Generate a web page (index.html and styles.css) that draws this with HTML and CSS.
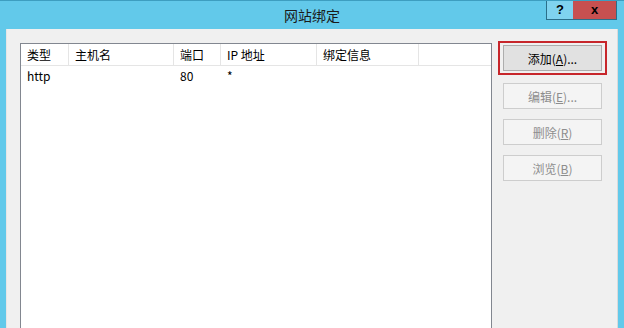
FILE: index.html
```html
<!DOCTYPE html>
<html lang="zh-CN">
<head>
    <meta charset="UTF-8">
    <title>网站绑定</title>
    <link rel="stylesheet" href="styles.css">
</head>
<body>
    <div class="window">
        <div class="titlebar">
            <div class="title">网站绑定</div>
            <div class="help-btn">?</div>
            <div class="close-btn">x</div>
        </div>
        <div class="client">
            <div class="listview">
                <div class="lv-header">
                    <div class="col c-type">类型</div>
                    <div class="col c-host">主机名</div>
                    <div class="col c-port">端口</div>
                    <div class="col c-ip">IP 地址</div>
                    <div class="col c-info">绑定信息</div>
                </div>
                <div class="lv-row">
                    <div class="cell c-type">http</div>
                    <div class="cell c-host"></div>
                    <div class="cell c-port">80</div>
                    <div class="cell c-ip">*</div>
                    <div class="cell c-info"></div>
                </div>
            </div>
            <div class="buttons">
                <div class="focus-ring">
                    <button class="btn">添加(<u>A</u>)...</button>
                </div>
                <button class="btn" disabled>编辑(<u>E</u>)...</button>
                <button class="btn" disabled>删除(<u>R</u>)</button>
                <button class="btn" disabled>浏览(<u>B</u>)</button>
            </div>
        </div>
    </div>
</body>
</html>
```

FILE: styles.css
```css
body {
    margin: 0;
    font-family: "Noto Sans CJK SC", "Liberation Sans", sans-serif;
    font-size: 12px;
    color: #000;
    overflow: hidden;
}

.window {
    background-color: #62c9ea;
    width: 624px;
    height: 328px;
    padding: 0 6px 0 6px;
    box-sizing: border-box;
    border-top: 1px solid #3d9ec0;
    display: flex;
    flex-direction: column;
}

.titlebar {
    height: 28px;
    position: relative;
    flex-shrink: 0;
}

.title {
    text-align: center;
    font-size: 14px;
    line-height: 29px;
    color: #1a1a1a;
}

.help-btn,
.close-btn {
    position: absolute;
    top: 0;
    height: 19px;
    line-height: 18px;
    text-align: center;
    font-family: "Liberation Sans", sans-serif;
    font-weight: bold;
    font-size: 13px;
    border: 1px solid #2a6f8a;
    border-top: none;
    box-sizing: border-box;
}

.help-btn {
    left: 540px;
    width: 28px;
    background-color: #7fd3ef;
    color: #000;
}

.close-btn {
    left: 567px;
    width: 44px;
    background-color: #c75050;
    color: #000;
    border-left: none;
}

.client {
    flex: 1;
    background-color: #f0f0f0;
    border-left: 1px solid #e6e6e6;
    border-right: 1px solid #dadada;
    display: flex;
    align-items: flex-start;
    padding: 14px 0 0 13px;
}

.listview {
    width: 472px;
    height: 300px;
    background: #fff;
    border: 1px solid #828790;
    box-sizing: border-box;
    flex-shrink: 0;
}

.lv-header,
.lv-row {
    display: flex;
}

.lv-header {
    height: 22px;
    border-bottom: 1px solid #e5e5e5;
    box-sizing: border-box;
}

.col {
    line-height: 21px;
    padding-left: 6px;
    border-right: 1px solid #e5e5e5;
    box-sizing: border-box;
}

.lv-row {
    height: 21px;
}

.cell {
    line-height: 20px;
    padding-left: 6px;
    box-sizing: border-box;
}

.c-type { width: 48px; }
.c-host { width: 105px; }
.c-port { width: 47px; }
.c-ip { width: 96px; }
.c-info { width: 102px; }

.buttons {
    display: flex;
    flex-direction: column;
    align-items: flex-start;
    gap: 10px;
    margin-left: 6px;
    margin-top: -2px;
}

.focus-ring {
    border: 2px solid #c7262b;
    padding: 2px 3px;
    margin-bottom: -2px;
}

.btn {
    font-family: "Noto Sans CJK SC", "Liberation Sans", sans-serif;
    font-size: 12px;
    width: 99px;
    height: 26px;
    padding: 0;
    background-color: #e1e1e1;
    border: 1px solid #adadad;
    color: #000;
}

.buttons > .btn {
    margin-left: 5px;
}

.btn:disabled {
    background-color: #f4f4f4;
    border-color: #cdcdcd;
    color: #8d8d8d;
}
```
